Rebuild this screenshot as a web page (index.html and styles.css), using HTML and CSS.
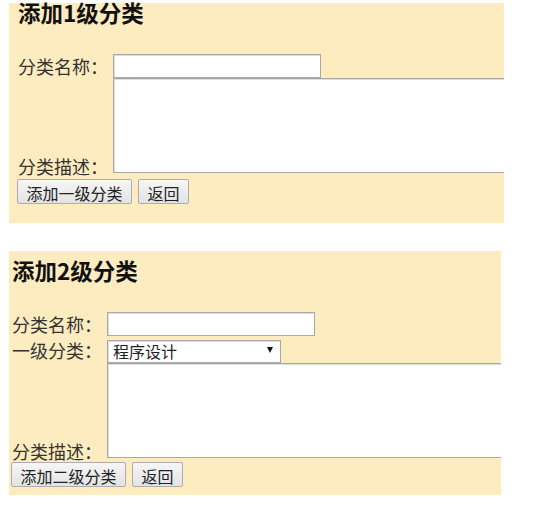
FILE: index.html
```html
<!DOCTYPE html>
<html lang="zh-CN">
<head>
<meta charset="utf-8">
<title>分类管理</title>
<link rel="stylesheet" href="styles.css">
</head>
<body>
<div class="page">
  <form class="panel panel-one">
    <h3 class="title">添加1级分类</h3>
    <div class="row row-mid">
      <span class="label">分类名称：</span>
      <input class="field" type="text">
    </div>
    <div class="row row-end">
      <span class="label label-low">分类描述：</span>
      <span class="area-clip"><textarea class="area"></textarea></span>
    </div>
    <div class="actions">
      <button type="button" class="btn">添加一级分类</button>
      <button type="button" class="btn">返回</button>
    </div>
  </form>

  <form class="panel panel-two">
    <h3 class="title">添加2级分类</h3>
    <div class="row row-mid">
      <span class="label">分类名称：</span>
      <input class="field" type="text">
    </div>
    <div class="row row-mid row-select">
      <span class="label">一级分类：</span>
      <span class="select-wrap">
        <select class="select">
          <option>程序设计</option>
        </select>
        <span class="arrow"></span>
      </span>
    </div>
    <div class="row row-end">
      <span class="label label-low">分类描述：</span>
      <span class="area-clip"><textarea class="area"></textarea></span>
    </div>
    <div class="actions">
      <button type="button" class="btn">添加二级分类</button>
      <button type="button" class="btn">返回</button>
    </div>
  </form>
</div>
</body>
</html>
```

FILE: styles.css
```css
html, body {
  margin: 0;
  padding: 0;
  background: #ffffff;
}

body {
  font-family: "Noto Sans CJK SC", "Noto Sans", sans-serif;
  color: #333333;
}

.page {
  padding: 3px 0 0 9px;
  display: flex;
  flex-direction: column;
  gap: 28px;
}

.panel {
  background: #fdecbf;
  display: flex;
  flex-direction: column;
  margin: 0;
}

.panel-one {
  width: 487px;
  padding: 0 0 19px 8px;
}

.panel-one .title {
  margin-top: -3px;
}

.panel-two {
  width: 490px;
  padding: 7px 0 8px 2px;
}

.title {
  margin: 0 0 30px 1px;
  font-size: 22.5px;
  line-height: 24px;
  font-weight: bold;
  color: #111111;
}

.row {
  display: flex;
}

.row-mid {
  align-items: center;
}

.row-end {
  align-items: flex-end;
}

.row-select {
  margin-top: 2px;
}

.panel-two .row-end {
  margin-top: 1px;
}

.label {
  width: 96px;
  flex: none;
  font-size: 18px;
  line-height: 24px;
  padding-left: 1px;
  box-sizing: border-box;
  white-space: nowrap;
  color: #333333;
}

.label-low {
  line-height: 16px;
  margin-bottom: -1px;
}

.field {
  box-sizing: border-box;
  width: 208px;
  height: 24px;
  margin: 0;
  padding: 0 3px;
  border: 1px solid #a9a9a9;
  box-shadow: inset 1px 1px 0 #dedede;
  background: #ffffff;
  font: 16px "Noto Sans CJK SC", sans-serif;
}

.area-clip {
  flex: 1;
  min-width: 0;
  overflow: hidden;
  display: flex;
}

.area {
  box-sizing: border-box;
  width: 420px;
  height: 95px;
  margin: 0;
  border: 1px solid #a9a9a9;
  box-shadow: inset 1px 1px 0 #dedede;
  background: #ffffff;
  resize: none;
  flex: none;
}

.select-wrap {
  position: relative;
  display: block;
  width: 174px;
  height: 23px;
}

.select {
  appearance: none;
  -webkit-appearance: none;
  box-sizing: border-box;
  width: 174px;
  height: 23px;
  margin: 0;
  padding: 0 0 0 5px;
  border: 1px solid #a9a9a9;
  box-shadow: inset 1px 1px 0 #dedede;
  border-radius: 0;
  background: #ffffff;
  color: #222222;
  font: 16px/21px "Noto Sans CJK SC", sans-serif;
}

.arrow {
  position: absolute;
  right: 8px;
  top: 8px;
  width: 0;
  height: 0;
  border-left: 3.5px solid transparent;
  border-right: 3.5px solid transparent;
  border-top: 6px solid #111111;
}

.actions {
  display: flex;
  gap: 6px;
  margin-top: 6px;
}

.panel-two .actions {
  margin-top: 4px;
}

.btn {
  box-sizing: border-box;
  height: 25px;
  margin: 0;
  padding: 2px 8.5px 0;
  border: 1px solid #adadad;
  border-radius: 2px;
  background: linear-gradient(#f6f6f6, #e3e3e3);
  color: #222222;
  font: 16px/20px "Noto Sans CJK SC", sans-serif;
}
```
